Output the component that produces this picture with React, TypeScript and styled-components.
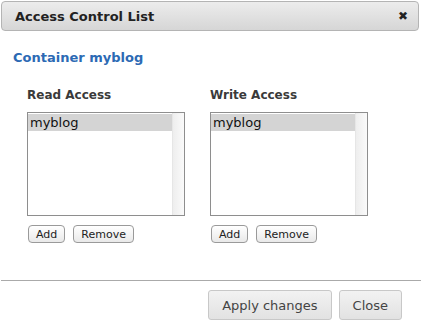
import styled, { createGlobalStyle } from "styled-components";

const GlobalStyle = createGlobalStyle`
  html, body {
    margin: 0;
    padding: 0;
    background: #ffffff;
    font-family: "DejaVu Sans", Verdana, sans-serif;
  }
`;

type AclList = { title: string; users: string[] };

const lists: AclList[] = [
  { title: "Read Access", users: ["myblog"] },
  { title: "Write Access", users: ["myblog"] },
];

export default function App() {
  return (
    <>
      <GlobalStyle />
      <Dialog>
        <TitleBar>
          <TitleText>Access Control List</TitleText>
          <CloseX>✖</CloseX>
        </TitleBar>
        <Body>
          <ContainerName>Container myblog</ContainerName>
          <Columns>
            {lists.map((list) => (
              <Column key={list.title}>
                <ColumnTitle>{list.title}</ColumnTitle>
                <ListBox>
                  <Options>
                    {list.users.map((u, i) => (
                      <Option key={u} selected={i === 0}>
                        {u}
                      </Option>
                    ))}
                  </Options>
                  <ScrollTrack />
                </ListBox>
                <SmallButtons>
                  <SmallButton>Add</SmallButton>
                  <SmallButton>Remove</SmallButton>
                </SmallButtons>
              </Column>
            ))}
          </Columns>
        </Body>
        <Footer>
          <BigButton>Apply changes</BigButton>
          <BigButton>Close</BigButton>
        </Footer>
      </Dialog>
    </>
  );
}

const Dialog = styled.div`
  width: 421px;
  height: 333px;
  display: flex;
  flex-direction: column;
  box-sizing: border-box;
  padding: 1px 2px 0 1px;
`;

const TitleBar = styled.div`
  height: 30px;
  box-sizing: border-box;
  display: flex;
  align-items: center;
  justify-content: space-between;
  padding: 0 10px 0 13px;
  border: 1px solid #b4b4b4;
  border-radius: 4px;
  background: linear-gradient(#ececec, #d6d6d6);
`;

const TitleText = styled.div`
  font-size: 13px;
  font-weight: bold;
  color: #222;
`;

const CloseX = styled.div`
  font-size: 12px;
  color: #222;
`;

const Body = styled.div`
  flex: 1;
  padding: 18px 0 0 12px;
`;

const ContainerName = styled.div`
  font-size: 13px;
  font-weight: bold;
  color: #2c6ab4;
  line-height: 18px;
`;

const Columns = styled.div`
  display: flex;
  gap: 25px;
  padding: 21px 0 0 14px;
`;

const Column = styled.div`
  display: flex;
  flex-direction: column;
`;

const ColumnTitle = styled.div`
  font-size: 12px;
  font-weight: bold;
  color: #3a3a3a;
  line-height: 14px;
  margin-bottom: 10px;
`;

const ListBox = styled.div`
  width: 158px;
  height: 104px;
  box-sizing: border-box;
  border: 1px solid #8e8e8e;
  display: flex;
  background: #fff;
`;

const Options = styled.div`
  flex: 1;
  padding-top: 1px;
`;

const Option = styled.div<{ selected?: boolean }>`
  height: 17px;
  line-height: 17px;
  padding-left: 2px;
  font-size: 13px;
  color: #111;
  background: ${(p) => (p.selected ? "#d4d4d4" : "transparent")};
`;

const ScrollTrack = styled.div`
  width: 11px;
  background: linear-gradient(to right, #eeeeee, #fafafa);
  border-left: 1px solid #e6e6e6;
`;

const SmallButtons = styled.div`
  display: flex;
  gap: 8px;
  margin-top: 9px;
  padding-left: 1px;
`;

const SmallButton = styled.button`
  font-family: "DejaVu Sans", Verdana, sans-serif;
  font-size: 11px;
  color: #222;
  height: 18px;
  padding: 0 7px;
  border: 1px solid #9a9a9a;
  border-radius: 4px;
  background: linear-gradient(#ffffff, #e9e9e9);
`;

const Footer = styled.div`
  border-top: 1px solid #aaaaaa;
  display: flex;
  justify-content: flex-end;
  gap: 7px;
  padding: 9px 19px 13px 0;
  margin-right: -2px;
`;

const BigButton = styled.button`
  font-family: "DejaVu Sans", Verdana, sans-serif;
  font-size: 13px;
  color: #444;
  height: 30px;
  padding: 0 13px;
  border: 1px solid #c8c8c8;
  border-radius: 3px;
  background: linear-gradient(#f2f2f2, #e2e2e2);
`;
